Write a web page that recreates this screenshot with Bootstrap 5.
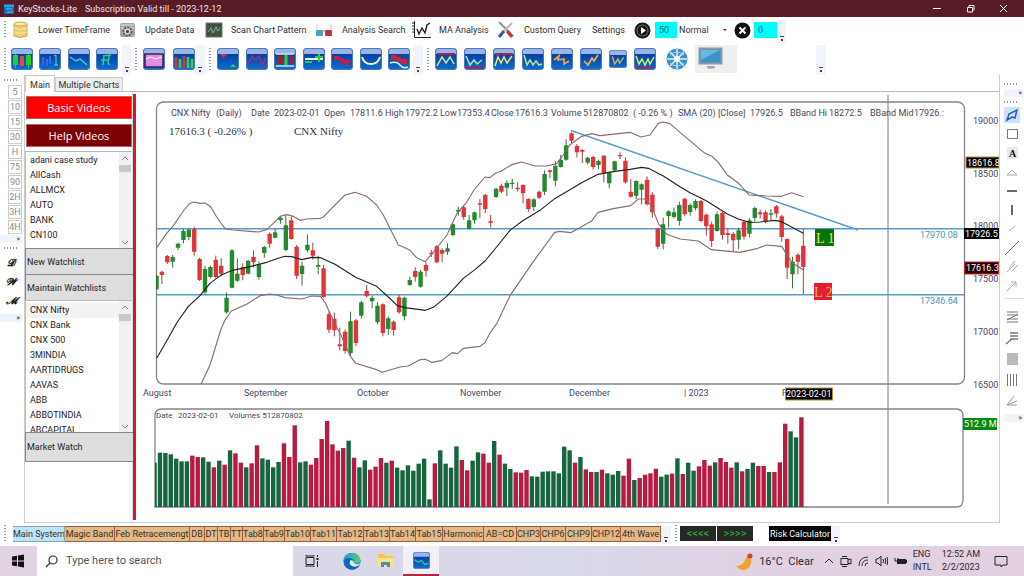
<!DOCTYPE html>
<html lang="en">
<head>
<meta charset="utf-8">
<meta name="viewport" content="width=device-width, initial-scale=1">
<title>KeyStocks-Lite</title>
<link href="https://cdn.jsdelivr.net/npm/bootstrap@5.3.0/dist/css/bootstrap.min.css" rel="stylesheet">
<style>
body{font-family:Roboto,"Open Sans",sans-serif;font-size:9px;line-height:12px;color:#2e2e2e;background:#fff;overflow-x:hidden}
button,input,select{font-family:inherit}
.plain{border:0;background:none;padding:0;margin:0;color:inherit;white-space:nowrap;text-align:left;line-height:12px;display:block}
.plain svg{display:block}
.titlebar{background:#591b25;color:#f0e4e6;height:17px}
.tools-a{display:grid;height:26px;align-items:center;grid-template-columns:12px 26px 81px 26px 60px 26px 84px 27px 70px 27px 58px 27px 68px 42px 21px 22px 57px 20px 23px 9px}
.tools-b{display:grid;height:32px;align-items:center;grid-template-columns:11px 107px 13px 10px 2px 52px 10px 11px 1px 193px 3px 10px 10px 2px 221px 10px 22px 7px 42px 79px 10px}
.grip{width:2px;height:18px;margin-left:4px;background:repeating-linear-gradient(#999 0 1px,transparent 1px 3px);justify-self:start}
.tools-b .grip{height:23px}
.grip-h{height:2px;width:14px;background:repeating-linear-gradient(90deg,#999 0 1px,transparent 1px 3px)}
.more{background:#f1f5fb;align-self:end;height:24px;display:flex;align-items:end;justify-content:center}
.more::after{content:"";width:4px;height:5px;border-top:1px solid #444;background:linear-gradient(#444,#444) center bottom/2px 2px no-repeat;margin-bottom:2px}
.tools-b .more{height:30px;padding-bottom:1px}
.cyan{background:#00fcfc;border:0;width:100%;height:16px;padding:0 4px;font-size:9px;color:#176a78}
.speed{border:0;background:#fff;font-size:9px;padding:0 2px;width:100%;appearance:none;color:#333}
.speed-wrap{position:relative}
.speed-wrap::after{content:"";position:absolute;right:7px;top:5px;border:2px solid transparent;border-top-color:#333;border-bottom:0}
.frames{width:24px}
.frames .cell{width:14px;height:14px;border:1px solid #ccc;text-align:center;color:#8b8b8b;margin-bottom:1px}
.script{font:italic bold 10px/19px "DejaVu Serif","Liberation Serif",serif;width:22px;text-align:center;color:#222}
.nubs{height:8px;width:22px;background:#eff4fa;text-align:right;font-size:8px;line-height:7px;padding-right:2px}
.workspace{border:1px solid #ccc;border-top:0}
.page-tabs{height:17px;border-bottom:1px solid #bbb;align-items:end}
.page-tabs .plain{border:1px solid #ccc;border-bottom:0;background:#eee;height:14px;width:68px;text-align:center}
.page-tabs .plain.active{background:#fff;height:17px;margin-bottom:-1px;padding-top:1px;width:30px}
.side{width:108px;border-right:1px solid #ddd}
.video{display:block;width:106px;margin-left:1px;height:23px;border:1px solid #b66;color:#fff;font-family:"Open Sans",sans-serif;font-size:11px;background:#fb0102;padding:0}
.video.dark{background:#7c0202;margin-top:5px}
.watch{position:relative;border:1px solid #bbb;border-width:1px 0 0 1px;overflow:hidden}
.watch .list-group-item{border:0;padding:0 0 0 4px;font-size:9px;line-height:15px;height:15px;color:#222;background:none}
.watch .list-group-item.picked{background:#f3f3f3}
#watchlists{height:97px;padding-top:1px}
#symbols{height:132px;padding-top:2px}
.scroller{position:absolute;right:1px;top:0;bottom:0;width:12px;background:#f0f0f0;display:flex;flex-direction:column;align-items:center}
.scroller i{display:block;width:12px;height:7px;background:#c8c8c8;margin-top:1px}
.wide{display:block;width:108px;height:26px;border:1px solid #888;border-width:1px 0 0 1px;background:#dedede;text-align:left;font-size:9px;padding:0 1px;color:#222}
.wide.last{height:30px;border-bottom-width:1px}
.redbar{width:3px;background:#c3202c;margin:2px 0 2px}
.drawing{width:24px}
.drawing .plain{width:16px;height:16px;margin-bottom:3px}
.drawing .plain.on{background:#cfe0fb}
.drawing .levels .plain{margin-bottom:5px}
.drawing hr{margin:4px 0 10px;border-color:#888}
.drawing svg{fill:none;stroke:#777}
.strategy{display:grid;height:23px;padding-bottom:2px;align-items:center;grid-template-columns:13px 648px 10px 9px 36px 1px 36px 16px 62px 9px}
.strategy .more{height:18px}
.strat-tabs{display:grid;grid-template-columns:52px 50px 75px 15px 13px 13px 12px 21px 21px 26px 26px 27px 26px 26px 27px 41px 33px 24px 25px 26px 29px 40px}
.strat-tabs .plain{background:#e2b98a;border:1px solid #a5583a;border-left-width:0;height:16px;color:#3b2e20;text-align:center;overflow:hidden;line-height:14px}
.strat-tabs .plain.active{background:#bfe4f8;border-color:#8aa}
.step{background:#262a26;color:#2fae3b;border:0;height:15px;font-size:11px;line-height:12px;padding:0}
.risk{background:#000;color:#fff;border:0;height:15px;font-size:9px;line-height:12px;padding:0;white-space:nowrap}
.taskbar{height:30px;background:linear-gradient(90deg,#e3d3e4,#d9d7e8 30%,#d8d9ea 55%,#e1d1e2 75%,#e3d0e0);color:#2b2b33}
.find{width:256px;background:#fff;height:30px}
.find input{border:0;outline:0;font-size:11px;width:210px;padding:0;background:none}
.find input::placeholder{color:#555;opacity:1}
.running{background:#f3eff6;width:36px;height:30px;border-bottom:2px solid #b32645;display:flex;justify-content:center;align-items:center}
.tray{line-height:13px;gap:6px}
.weather{font-size:11px}
.chart{display:block;width:100%;height:auto;font-size:9px;fill:#46465e}
.frame-line{fill:none;stroke:#85858b;stroke-width:1.3}
.up{fill:#238a2e;stroke:#3a6a3c}
.down{fill:#e23438;stroke:#9e4246}
.band{fill:none;stroke:#8b6a70;stroke-width:3.4;stroke-linejoin:round}
.level{stroke:#559bcc;stroke-width:1.4}
.cursor-line{stroke:#b9b9cf;stroke-width:2}
.tag{fill:#fff}
.serif{font-family:"Liberation Serif",serif}
</style>
<script src="https://cdn.jsdelivr.net/npm/bootstrap@5.3.0/dist/js/bootstrap.bundle.min.js"></script>
</head>
<body>
<svg width="0" height="0" class="position-absolute" aria-hidden="true">
<defs>
<linearGradient id="blue" x2="0" y2="1"><stop offset="0" stop-color="#062f94"/><stop offset="1" stop-color="#0b6fd0"/></linearGradient>
<symbol id="tile" viewBox="0 0 22 22"><rect x=".5" y=".5" width="21" height="21" rx="2.5" fill="url(#blue)" stroke="#4b79bd"/><path d="M1 6V3Q1 1 3 1H19Q21 1 21 3V6Z" fill="#9db4e6"/></symbol>
</defs>
</svg>

<header class="titlebar d-flex align-items-center">
 <svg class="ms-1" width="10" height="12" viewBox="0 0 10 12"><rect y="1" width="10" height="10" rx="1" fill="#1370bd"/><path d="M0 3H10M2 6H8M3 9H9" stroke="#62c7ee"/></svg>
 <span class="ms-1">KeyStocks-Lite</span><span class="ms-2">Subscription Valid till - 2023-12-12</span>
 <div class="ms-auto d-flex gap-4 pe-3 align-items-center">
  <button class="plain" aria-label="Minimize"><svg width="10" height="9"><path d="M1 4.500H9" stroke="#fff"/></svg></button>
  <button class="plain" aria-label="Restore"><svg width="9" height="9" fill="none" stroke="#fff"><path d="M1.500 3.500H6.500V8H1.500ZM3 3V1.500H8V6H7"/></svg></button>
  <button class="plain" aria-label="Close"><svg width="9" height="9"><path d="M1 1L8 8M8 1L1 8" stroke="#fff"/></svg></button>
 </div>
</header>

<nav class="tools-a" aria-label="Main tools">
 <span class="grip"></span>
 <svg width="17" height="18"><path d="M2 3V15Q8 18 15 15V3" fill="#efcd6d" stroke="#c9a94e"/><ellipse cx="8.500" cy="3" rx="6.500" ry="2" fill="#fbe9a6" stroke="#c9a94e"/><path d="M2 7Q8 10 15 7M2 11Q8 14 15 11" fill="none" stroke="#fbe9a6"/></svg>
 <button class="plain">Lower TimeFrame</button>
 <svg width="17" height="18"><rect x="1" y="2" width="15" height="14" rx="2" fill="#a5a5a5"/><path d="M2 4H15M2 7H15" stroke="#e2e2e2"/><circle cx="8.500" cy="10.500" r="4" fill="#ddd" stroke="#555" stroke-width="2" stroke-dasharray="2 1"/><circle cx="8.500" cy="10.500" r="1.500" fill="#333"/></svg>
 <button class="plain">Update Data</button>
 <svg width="18" height="18"><rect x="1" y="2" width="16" height="14" fill="#3e4b3e" stroke="#777"/><path d="M2 6H16M2 10H16M6 3V15M11 3V15" stroke="#627362" stroke-width=".5"/><path d="M3 11L6 7L8 12L11 6L13 10L15 7" fill="none" stroke="#79bb7c"/></svg>
 <button class="plain">Scan Chart Pattern</button>
 <svg width="18" height="18"><path d="M2 9L2 3M16 9V3" stroke="#ccc"/><rect x="1" y="9" width="7" height="6" rx="1" fill="#4e9fc4"/><rect x="10" y="9" width="7" height="6" rx="1" fill="#c33232"/><path d="M7 10H11" stroke="#888"/></svg>
 <button class="plain">Analysis Search</button>
 <svg width="19" height="20" fill="none" stroke="#222"><path d="M2.500 1V17.500H19"/><path d="M0 3H2M0 6H2M0 9H2M0 12H2"/><path d="M5 9L7 14L10 8L13 13L15 5L18 3" stroke-width="1.400"/></svg>
 <button class="plain">MA Analysis</button>
 <svg width="18" height="18" fill="none"><path d="M2 1L16 15" stroke="#8b98ab" stroke-width="2"/><path d="M10 10L15 16" stroke="#cf2c30" stroke-width="3"/><path d="M15 2L7 10" stroke="#bbb" stroke-width="2"/><path d="M7 10L2 16" stroke="#315c9f" stroke-width="3"/></svg>
 <button class="plain">Custom Query</button>
 <button class="plain">Settings</button>
 <button class="plain" aria-label="Play"><svg width="17" height="17"><circle cx="8.500" cy="8.500" r="8" fill="#151515"/><circle cx="8.500" cy="8.500" r="5.500" fill="none" stroke="#777"/><path d="M7 5L12 8.500L7 12Z" fill="#fff"/></svg></button>
 <input class="cyan" aria-label="Bars" value="50">
 <div class="speed-wrap"><select class="speed" aria-label="Speed"><option>Normal</option></select></div>
 <button class="plain" aria-label="Cancel"><svg width="17" height="17"><circle cx="8.500" cy="8.500" r="8" fill="#111"/><path d="M5.500 5.500L11.500 11.500M11.500 5.500L5.500 11.500" stroke="#fff" stroke-width="2"/></svg></button>
 <input class="cyan" aria-label="Offset" value="0">
 <span class="more"></span>
</nav>

<nav class="tools-b" aria-label="Indicators">
 <span class="grip"></span><div class="d-flex justify-content-between" data-icons="0,1,2,3"></div><span class="more ms-1"></span>
 <span class="grip"></span><i></i><div class="d-flex justify-content-between" data-icons="4,5"></div><span class="more"></span>
 <span class="grip"></span><i></i><div class="d-flex justify-content-between" data-icons="6,7,8,9,10,11,12"></div><i></i><span class="more"></span>
 <span class="grip"></span><i></i><div class="d-flex justify-content-between" data-icons="13,14,15,16,17,18,19,20"></div><i></i>
 <button class="plain" aria-label="Network"><svg width="22" height="22"><circle cx="11" cy="11" r="10.500" fill="#3c92c6"/><path d="M11 1V21M1 11H21M4 4L18 18M18 4L4 18" stroke="#d9eef8" stroke-width="1.500"/><circle cx="11" cy="11" r="3" fill="#fff"/><path d="M4 7Q11 1 18 7M4 15Q11 21 18 15" fill="none" stroke="#a9d5ee"/></svg></button><i></i>
 <button class="plain" aria-label="Display"><svg width="42" height="28"><rect width="42" height="28" fill="#efefef"/><rect x="4.500" y="3.500" width="22" height="15" fill="#3995c8" stroke="#8f9aa3" stroke-width="2"/><path d="M6 5H25L6 15Z" fill="#69b6df"/><path d="M12 21H20V23L16 24L12 23Z" fill="#9ab"/></svg></button><i></i>
 <span class="more"></span>
</nav>

<main class="d-flex">
 <aside class="frames pt-1" aria-label="Timeframes">
  <div class="grip-h ms-1 mb-1"></div>
  <div class="ps-2">
   <button class="plain cell">5</button><button class="plain cell">10</button><button class="plain cell">15</button><button class="plain cell">30</button><button class="plain cell">H</button><button class="plain cell">75</button><button class="plain cell">90</button><button class="plain cell">2H</button><button class="plain cell">3H</button><button class="plain cell">4H</button>
  </div>
  <div class="nubs">»</div>
  <div class="grip-h ms-1 mt-1 mb-1"></div>
  <button class="plain script">𝓓</button><button class="plain script">𝓦</button><button class="plain script">𝓜</button>
  <div class="nubs mt-1">»</div>
 </aside>

 <section class="workspace flex-fill overflow-hidden">
  <div class="page-tabs d-flex" role="tablist"><button class="plain active" role="tab">Main</button><button class="plain" role="tab">Multiple Charts</button></div>
  <div class="d-flex">
   <div class="side pt-1">
    <button class="video">Basic Videos</button>
    <button class="video dark">Help Videos</button>
    <div class="watch mt-1" id="watchlists"><div class="list-group rounded-0">
     <a href="#" class="list-group-item">adani case study</a><a href="#" class="list-group-item">AllCash</a><a href="#" class="list-group-item">ALLMCX</a><a href="#" class="list-group-item">AUTO</a><a href="#" class="list-group-item">BANK</a><a href="#" class="list-group-item">CN100</a></div>
     <div class="scroller"><svg width="8" height="12" fill="none" stroke="#888"><path d="M1 8L4 5L7 8"/></svg><i></i><svg class="mt-auto" width="8" height="12" fill="none" stroke="#888"><path d="M1 5L4 8L7 5"/></svg></div>
    </div>
    <button class="wide">New Watchlist</button><button class="wide">Maintain Watchlists</button>
    <div class="watch" id="symbols"><div class="list-group rounded-0">
     <a href="#" class="list-group-item picked">CNX Nifty</a><a href="#" class="list-group-item">CNX Bank</a><a href="#" class="list-group-item">CNX 500</a><a href="#" class="list-group-item">3MINDIA</a><a href="#" class="list-group-item">AARTIDRUGS</a><a href="#" class="list-group-item">AAVAS</a><a href="#" class="list-group-item">ABB</a><a href="#" class="list-group-item">ABBOTINDIA</a><a href="#" class="list-group-item">ABCAPITAL</a></div>
     <div class="scroller"><svg width="8" height="12" fill="none" stroke="#888"><path d="M1 8L4 5L7 8"/></svg><i></i><svg class="mt-auto" width="8" height="12" fill="none" stroke="#888"><path d="M1 5L4 8L7 5"/></svg></div>
    </div>
    <button class="wide last">Market Watch</button>
   </div>
   <div class="redbar"></div>
   <div class="flex-fill">
   <svg class="chart" viewBox="136 92 863 430" role="img" aria-label="CNX Nifty daily chart">
    <path class="cursor-line" d="M888 95V504"/>
    <rect class="frame-line" x="156.500" y="102" width="808" height="282" rx="7"/>
    <path class="frame-line" d="M155 507V416Q155 409 162 409H956Q963 409 963 416V500Q963 507 956 507Z"/>
    <path class="level" d="M157 228.700H964M157 294.700H964M571 130.500L858 230"/>
    <g id="candles"></g>
    <g transform="scale(.33333)">
     <path class="band" d="M470 743L500 700 520 677 550 633 568 611 582 606 600 610 615 609 632 620 650 651 676 687 700 690 750 694 775 696 800 689 820 670 840 649 860 644 880 649 900 661 920 657 960 655 970 651 995 625 1035 585 1065 577 1100 589 1130 615 1150 645 1180 705 1195 735 1210 741 1230 751 1250 773 1276 785 1308 747 1341 705 1357 670 1373 637 1400 607 1422 570 1455 531 1470 533 1487 519 1503 514 1535 494 1565 486 1605 498 1640 498 1670 491 1690 465 1710 434 1745 409 1775 401 1800 407 1890 397 1923 411 1950 405 1975 370 1990 366 2010 371 2040 397 2115 460 2135 468 2155 487 2182 525 2215 549 2247 585 2300 588 2345 589 2375 578 2410 590"/>
     <path class="band" d="M603 1153L630 1095 662 990 675 960 694 933 740 913 780 887 810 882 830 885 855 893 905 897 935 888 962 889 975 907 995 951 1025 1010 1050 1067 1067 1090 1130 1109 1147 1117 1200 1101 1225 1098 1260 1079 1276 1078 1295 1087 1325 1082 1357 1058 1373 1061 1390 1045 1440 1039 1455 1028 1470 999 1490 971 1530 887 1600 785 1664 697 1680 694 1712 698 1775 663 1794 637 1840 626 1892 617 1915 597 1938 597 1955 620 1975 670 2000 703 2040 717 2095 723 2134 749 2220 757 2270 746 2300 735 2345 739 2360 763 2377 789 2410 809"/>
     <path class="band" style="stroke:#222" d="M470 1075L500 1023 530 969 565 919 600 887 630 850 662 826 694 812 750 800 800 787 835 775 855 769 875 770 905 779 935 772 962 773 1005 793 1067 832 1130 859 1165 891 1192 917 1215 923 1276 931 1300 922 1340 889 1390 835 1425 809 1455 783 1485 747 1530 691 1567 663 1620 631 1664 596 1745 548 1794 523 1840 515 1890 508 1925 502 1945 505 1990 528 2040 560 2070 578 2120 603 2182 642 2215 657 2247 667 2280 666 2325 661 2345 665 2410 700"/>
    </g>
    <g id="volume"></g>
    <g id="quote"></g>
    <g class="serif" font-size="11" fill="#33334d"><text x="169" y="135">17616.3 ( -0.26% )</text><text x="294" y="135">CNX Nifty</text></g>
    <g fill="#4b92c4"><text x="920" y="238">17970.08</text><text x="920" y="304">17346.64</text></g>
    <rect x="815" y="229" width="19" height="17" fill="#077408"/><rect x="814" y="283" width="18" height="17" fill="#e21d35"/>
    <g class="serif" font-size="14" fill="#f2e24e"><text x="816" y="243">L 1</text><text x="814" y="297" fill="#f7b23c">L 2</text></g>
    <g><text x="973" y="124">19000</text><text x="973" y="177">18500</text><text x="973" y="229">18000</text><text x="973" y="282">17500</text><text x="973" y="335">17000</text><text x="973" y="388">16500</text>
    <text x="143" y="396">August</text><text x="244" y="396">September</text><text x="357" y="396">October</text><text x="460" y="396">November</text><text x="569" y="396">December</text><text x="684" y="396">| 2023</text><text x="782" y="396">F</text></g>
    <g class="tag"><rect x="966" y="157" width="33" height="11" fill="#000" stroke="#b39337"/><rect x="964" y="228" width="35" height="11" fill="#000"/><rect x="964.500" y="262" width="34" height="12" fill="#200" stroke="#d11f2c"/><rect x="785.500" y="388" width="47" height="12" fill="#000" stroke="#b39337"/><rect x="963" y="418" width="34" height="12" fill="#078a12"/>
    <text x="967" y="166">18616.8</text><text x="965" y="237">17926.5</text><text x="966" y="271">17616.3</text><text x="786" y="397">2023-02-01</text><text x="964" y="427">512.9 M</text></g>
   </svg>
   </div>
  </div>
 </section>

 <aside class="drawing ps-1" aria-label="Drawing tools">
  <div class="mt-1 pt-1"><div class="grip-h"></div></div><div class="nubs mt-1 w-100">»</div><div class="grip-h mt-1 mb-1"></div>
  <div data-tools="0,10"></div>
  <hr>
  <div class="levels" data-tools="10,15"></div>
  <div class="nubs w-100">»</div>
 </aside>
</main>

<nav class="strategy" aria-label="Strategies">
 <span class="grip"></span>
 <div class="strat-tabs"><button class="plain active">Main System</button><button class="plain">Magic Band</button><button class="plain">Feb Retracemengt</button><button class="plain">DB</button><button class="plain">DT</button><button class="plain">TB</button><button class="plain">TT</button><button class="plain">Tab8</button><button class="plain">Tab9</button><button class="plain">Tab10</button><button class="plain">Tab11</button><button class="plain">Tab12</button><button class="plain">Tab13</button><button class="plain">Tab14</button><button class="plain">Tab15</button><button class="plain">Harmonic</button><button class="plain">AB=CD</button><button class="plain">CHP3</button><button class="plain">CHP6</button><button class="plain">CHP9</button><button class="plain">CHP12</button><button class="plain">4th Wave</button></div>
 <span class="more"></span><span class="grip"></span>
 <button class="step">&lt;&lt;&lt;&lt;</button><i></i><button class="step">&gt;&gt;&gt;&gt;</button><i></i><button class="risk">Risk Calculator</button><span class="more"></span>
</nav>

<footer class="taskbar d-flex align-items-center">
 <button class="plain ps-2 me-2" aria-label="Start"><svg class="ms-1" width="17" height="14"><path d="M0 2.500L5 1.700V6.500H0ZM6 1.500L12 .5V6.500H6ZM0 7.500H5V12.300L0 11.500ZM6 7.500H12V13.500L6 12.500Z" fill="#111"/></svg></button>
 <label class="find d-flex align-items-center gap-2 ps-2"><svg width="13" height="13" fill="none" stroke="#333" stroke-width="1.200"><circle cx="8" cy="5" r="4"/><path d="M5 8L1 12"/></svg><input type="search" placeholder="Type here to search"></label>
 <button class="plain ms-2 ps-1" aria-label="Task view"><svg width="14" height="14" fill="none" stroke="#222"><path d="M1 3.500H9V10.500H1ZM1 1V2H9V1M1 13V12H9V13M12.500 1V3M12.500 7V13"/><path d="M11.500 5H13.500" stroke-width="2"/></svg></button>
 <button class="plain ms-4" aria-label="Edge"><svg width="18" height="19" viewBox="0 0 19 19"><defs><linearGradient id="sea" x2="1"><stop stop-color="#1a9bd7"/><stop offset="1" stop-color="#5fce6a"/></linearGradient></defs><circle cx="9.500" cy="9.500" r="9" fill="#1465b4"/><path d="M.5 9Q1 .5 9.500 .5Q18 1 18.500 8Q18 12 13 12Q10 12 11 10Q12 7 8.500 6Q3 5 .5 9" fill="url(#sea)"/><path d="M8 8Q5 14 12 15Q15 15 17.500 13L18.500 11Q12 14 11 10Q11 8 8 8" fill="#d9e9f5"/></svg></button>
 <button class="plain ms-3" aria-label="Files"><svg width="18" height="16"><path d="M1 1H7L9 3H16V14H1Z" fill="#f4c84a"/><path d="M1 5H16V14H1Z" fill="#ffe08a"/><path d="M4 14V9H13V14H10V12H7V14Z" fill="#3f91cd"/></svg></button>
 <button class="plain running ms-2" aria-label="KeyStocks"><svg width="17" height="17" viewBox="0 0 22 22"><use href="#tile"/><path d="M2 10L7 13 11 11 15 16 20 15" fill="none" stroke="#32b8a4" stroke-width="2"/></svg></button>
 <div class="tray ms-auto d-flex align-items-center pe-3">
  <svg width="18" height="19"><path d="M13 1Q9 15 1 14Q4 18 9 18Q17 16 16 8Z" fill="#f4a02c"/><circle cx="15" cy="4" r="2.500" fill="#bf4a3c"/></svg>
  <span class="weather">16°C&nbsp; Clear</span>
  <svg class="ms-1" width="10" height="8" fill="none" stroke="#222"><path d="M1 6L5 2L9 6"/></svg>
  <svg width="12" height="13" fill="none" stroke="#222"><rect x="1" y="3.500" width="7" height="6"/><path d="M8 5L11 4V9L8 8M2 1.500H7M2 11.500H7"/></svg>
  <svg width="11" height="12" fill="none" stroke="#333"><path d="M1 11Q1 2 10 2M4 11Q4 5 10 5M7 11Q7 8 10 8"/></svg>
  <svg width="13" height="12" fill="none" stroke="#222"><path d="M1 4H3L6 1V11L3 8H1ZM8 4Q9 6 8 8M10 3Q11.500 6 10 9M12 2Q13.500 6 12 10"/></svg>
  <svg width="13" height="10"><rect x="3" y="3" width="9" height="5" fill="#222"/><path d="M1 2V5H4V2M12.500 4V7" stroke="#222" fill="none"/></svg>
  <span>ENG<br>INTL</span><span class="text-center ms-1">12:52 AM<br>2/2/2023</span>
  <svg class="ms-2" width="14" height="13" fill="none" stroke="#222"><path d="M1 1.500H13V10H9L7 12V10H1Z"/></svg>
 </div>
</footer>

<script>
// Indicator buttons: artwork drawn inside the shared blue tile
const icons = [
 '<path d="M2 7H7V17H2ZM15 7H20V17H15Z" fill="#1fd32b"/><path d="M9 8H13V18H9Z" fill="#e44"/><path d="M4.500 6V20M17.500 6V20" stroke="#1fd32b"/>',
 '<path d="M4 9V17M8 11V18M11 8V16" stroke="#3b68e0" stroke-width="2"/><path d="M15 8L17 7V17M15 17H19" stroke="#6fd7c5"/>',
 '<path d="M2 9L8 13 12 11 19 17" stroke="#43cfc0" stroke-width="1.500"/>',
 '<path d="M8 8L7 17M13 8L12 14Q12 17 14 16M5 12H13M7 8L15 7" stroke="#2dd27c" stroke-width="1.600"/>',
 '<path d="M2 6H20V19H2Z" fill="#e28be0" stroke="#37235c" stroke-width="1.500"/><path d="M3 11L8 9 12 11 19 9" stroke="#fff"/>',
 '<path d="M3 20V9M11 20V8" stroke="#d33" stroke-width="2.500"/><path d="M7 20V11M15 20V9M19 20V11" stroke="#3ecb58" stroke-width="2.500"/>',
 '<path d="M3 6H10L6.500 10Z" fill="#e02d42"/><path d="M13 19H19L16 16Z" fill="#32d045"/>',
 '<path d="M2 16L6 8 9 12 13 8 16 18 20 9" stroke="#94327a" stroke-width="1.600"/>',
 '<path d="M2 6H20M2 18H20" stroke="#cfe9d8" stroke-width="1.500"/><path d="M3 8H9V16H3ZM15 8H20V16H15Z" fill="#9b2330"/><path d="M12 7V17" stroke="#2bd33c" stroke-width="3"/>',
 '<path d="M2 11H20" stroke="#e4f4da" stroke-width="2"/><path d="M2 14H9M12 9H20M16 6V14" stroke="#29cc3c" stroke-width="2"/>',
 '<path d="M3 8H9V12H3ZM9 10H13V15H9ZM13 12H19V17H13Z" fill="#c01e46"/>',
 '<path d="M2 9Q4 16 11 16Q18 16 20 9" stroke="#f4eebc" stroke-width="2"/>',
 '<path d="M3 7H9V12H3ZM9 9H13V14H9ZM13 11H19V16H13Z" fill="#d21e36"/><path d="M2 15Q9 13 12 17T20 19" stroke="#e4f4da" stroke-width="1.500"/>',
 '<path d="M2 6H20" stroke="#a3254d" stroke-width="2"/><path d="M2 18L7 9 11 15 15 9 19 16" stroke="#d3e98c" stroke-width="1.500"/>',
 '<path d="M2 19.500H20" stroke="#a3254d" stroke-width="2"/><path d="M2 8L6 17 10 12 13 16 18 12" stroke="#b0e9b0" stroke-width="1.500"/>',
 '<path d="M2 6H20" stroke="#a3254d" stroke-width="2"/><path d="M2 18L5 9 8 15 11 9 14 15 19 8" stroke="#f0e66c" stroke-width="1.500"/>',
 '<path d="M2 7L5 17 8 12 11 17 14 13 17 17 20 16" stroke="#b8e98c" stroke-width="1.500"/>',
 '<path d="M3 12L8 8 7 12 13 11 13 16 18 13" stroke="#f0a43c" stroke-width="1.700"/>',
 '<path d="M4 13L8 17 12 10 14 13 18 7" stroke="#f0b44c" stroke-width="1.700"/>',
 '<path d="M4 8L7 17 11 11 13 16 18 9" stroke="#d9b05c" stroke-width="1.700"/>',
 '<path d="M2 19.500H20" stroke="#a3254d" stroke-width="2"/><path d="M2 8L5 16 8 11 11 17 14 11 16 16 20 9" stroke="#cdf06c" stroke-width="1.500"/>'
];
document.querySelectorAll('[data-icons]').forEach(group => {
  group.innerHTML = group.dataset.icons.split(',').map(n =>
    `<button class="plain" aria-label="Indicator ${+n + 1}"><svg width="${n == 19 ? 18 : 22}" height="22" viewBox="0 0 22 22" fill="none"><use href="#tile"/>${icons[n]}</svg></button>`).join('');
});

const tools = [
 '<path d="M3 13L5 7 13 3 11 11 8 10Z" stroke="#2a5db6" stroke-width="1.500"/>',
 '<path d="M3.500 3.500H13.500V12.500H3.500Z"/>',
 '<path d="M3 2H14V14H3Z" fill="#e9e9e9" stroke="none"/><text x="5" y="12" font-family="Liberation Serif" font-weight="bold" font-size="10" fill="#111" stroke="none">A</text>',
 '<path d="M3 11H13L8 6Z" stroke="#aaa"/>','<path d="M3 8H13" stroke="#333" stroke-width="1.500"/>',
 '<path d="M8 3V13" stroke="#333" stroke-width="1.500"/>','<path d="M5 10L11 5" stroke="#aaa"/>',
 '<path d="M1 15L15 1"/>','<path d="M3 13L11 5M5 9L11 2M8 12L14 6" stroke="#aaa"/>','<path d="M3 13L12 4M7 4H12V9" stroke="#aaa"/>',
 '<path d="M3 3H14M3 6H14M3 10H14M3 13H14M3 11L14 5"/>','<path d="M6 3H14M6 6H14M6 9H14M2 14L8 9" stroke-width="1.500"/>',
 '<path d="M3 3H14M3 5H14M3 7H14M3 9H14M3 11H14M3 13H14"/>','<path d="M3.500 2V14M6.500 2V14M9.500 2V14M12.500 2V14"/>','<path d="M13 12H3L13 8M3 12L10 3" stroke="#999"/>'];
document.querySelectorAll('[data-tools]').forEach(group => {
  const [from, to] = group.dataset.tools.split(',').map(Number);
  group.innerHTML = tools.slice(from, to).map((t, i) =>
    `<button class="plain${from + i ? '' : ' on'}" aria-label="Tool ${from + i + 1}"><svg width="16" height="16">${t}</svg></button>`).join('');
});

// Sessions: direction, high, body top, body bottom, low (3 units per pixel, from the chart's top)
const sessions = `g540,542,583,585 r527,530,540,567 r480,483,502,507 g480,486,500,518 g443,446,458,465 g402,408,435,445 g400,404,426,436 r395,402,470,482 r488,492,555,558 g512,522,592,598 g512,516,546,550 r482,494,546,550 r490,512,536,545 g592,608,652,656 g463,466,578,580 g490,536,557,560 r505,517,540,556 g494,497,536,538 r466,486,502,518 g500,508,546,554 g453,456,474,488 r412,416,446,458 g400,412,428,430 g365,368,376,386 g362,391,465,468 r365,376,432,434 r450,455,542,552 g500,512,537,572 g418,449,466,472 r443,466,482,494 g482,510,515,538 r510,520,606,608 r650,658,704,714 r653,672,706,724 r698,748,754,766 r704,710,768,776 g650,679,774,782 r672,676,744,754 g618,622,662,670 r570,588,604,608 g602,608,619,640 g622,632,682,688 r625,628,714,724 g665,670,702,720 r676,680,705,722 r600,607,652,656 g605,608,664,676 g545,555,570,572 r517,528,546,560 g525,530,575,578 r502,510,527,545 r465,473,478,486 r450,454,502,505 r460,465,476,502 g445,460,470,480 g385,388,420,424 g335,345,350,362 r333,337,366,374 g360,376,402,404 g350,352,376,386 r312,325,329,370 r297,300,342,354 r360,378,383,398 g278,281,306,308 r266,272,290,294 g256,264,278,303 g252,263,267,282 r262,278,283,290 r268,270,295,325 r310,312,342,350 g310,313,336,348 r287,290,308,312 g226,237,290,300 r224,226,231,250 g198,212,257,274 g180,194,216,218 g133,151,194,197 r112,115,137,146 r147,153,172,188 r162,165,170,204 g186,188,203,208 r182,186,216,224 g194,198,210,222 r180,182,236,262 g230,234,265,280 g197,199,226,230 r172,180,184,192 r187,197,262,266 r252,290,305,308 g256,258,302,312 g265,268,284,328 r244,254,328,332 r292,299,352,368 r398,401,455,462 g368,388,446,463 g346,349,363,398 g338,352,366,370 g320,330,378,392 r308,311,358,364 g325,330,351,362 g313,318,340,346 r315,318,378,382 r355,359,394,422 r380,388,438,456 g350,358,408,410 r350,354,420,434 r400,414,420,446 r412,416,436,468 g398,406,434,462 r375,380,425,434 g370,376,416,428 g335,339,369,378 r344,352,358,370 r346,352,380,384 g342,355,359,378 r330,334,356,368 r360,364,426,440 r430,432,518,552 g485,500,538,580 r475,479,500,538 r402,452,516,598`.split(' ');
document.getElementById('candles').innerHTML = sessions.map((s, i) => {
  const [hi, top, bot, lo] = s.slice(1).split(',').map(v => 95 + v / 3), x = 156.5 + 5.39 * i;
  const left = i ? x - 2.2 : x;
  return `<g class="${s[0] == 'g' ? 'up' : 'down'}"><path d="M${x} ${hi}V${lo}"/><rect x="${left}" y="${top}" width="${x + 2.2 - left}" height="${bot - top}" rx=".5" stroke="none"/></g>`;
}).join('');

const volumes = 'g248 g218 g219 g223 g236 g244 g244 r227 r231 g232 g245 r262 g242 r254 g211 r220 r248 g262 r250 r196 g235 g239 g262 g246 r190 r231 r136 g247 g244 r254 r234 r177 r123 r193 r212 r204 g182 r233 g262 g241 r269 r260 r234 g248 r242 g263 g271 g256 g272 g251 g236 g358 r250 g211 g251 g263 g199 r240 r271 g242 g217 r221 r248 g183 r224 g251 g267 r277 r278 r270 g289 g290 g275 g274 g274 g280 g200 g211 r248 g231 r268 r276 g276 r269 g280 g284 g273 r287 r236 g300 r294 r284 r280 r266 g290 g284 r281 g235 r282 g248 g272 r259 r240 r257 g247 r234 r246 r263 g247 r274 g267 g248 r258 r258 g276 r276 r247 r131 g154 g172 r112'.split(' ');
document.getElementById('volume').innerHTML = volumes.map((v, i) => {
  const y = 380 + v.slice(1) / 3, x = 152.4 + 5.39 * i, left = Math.max(x, 155);
  return `<rect x="${left}" y="${y}" width="${x + 4.4 - left}" height="${507 - y}" fill="${v[0] == 'g' ? '#17653f' : '#b81a42'}"/>`;
}).join('');

const quote = [[171,'CNX Nifty'],[216,'(Daily)'],[251,'Date'],[274,'2023-02-01'],[324,'Open'],[350,'17811.6'],[385,'High'],[405,'17972.2'],[440,'Low'],[457,'17353.4'],[491,'Close'],[515,'17616.3'],[551,'Volume'],[583,'512870802'],[633,'( -0.26 % )'],[678,'SMA (20) [Close]'],[750,'17926.5'],[790,'BBand Hi'],[829,'18272.5'],[870,'BBand Mid'],[914,'17926.:']];
document.getElementById('quote').innerHTML = quote.map(([x, t]) => `<text x="${x}" y="116">${t}</text>`).join('')
  + '<g font-size="8"><text x="156" y="418">Date</text><text x="178" y="418">2023-02-01</text><text x="229" y="418">Volumes 512870802</text></g>';
</script>
</body>
</html>
